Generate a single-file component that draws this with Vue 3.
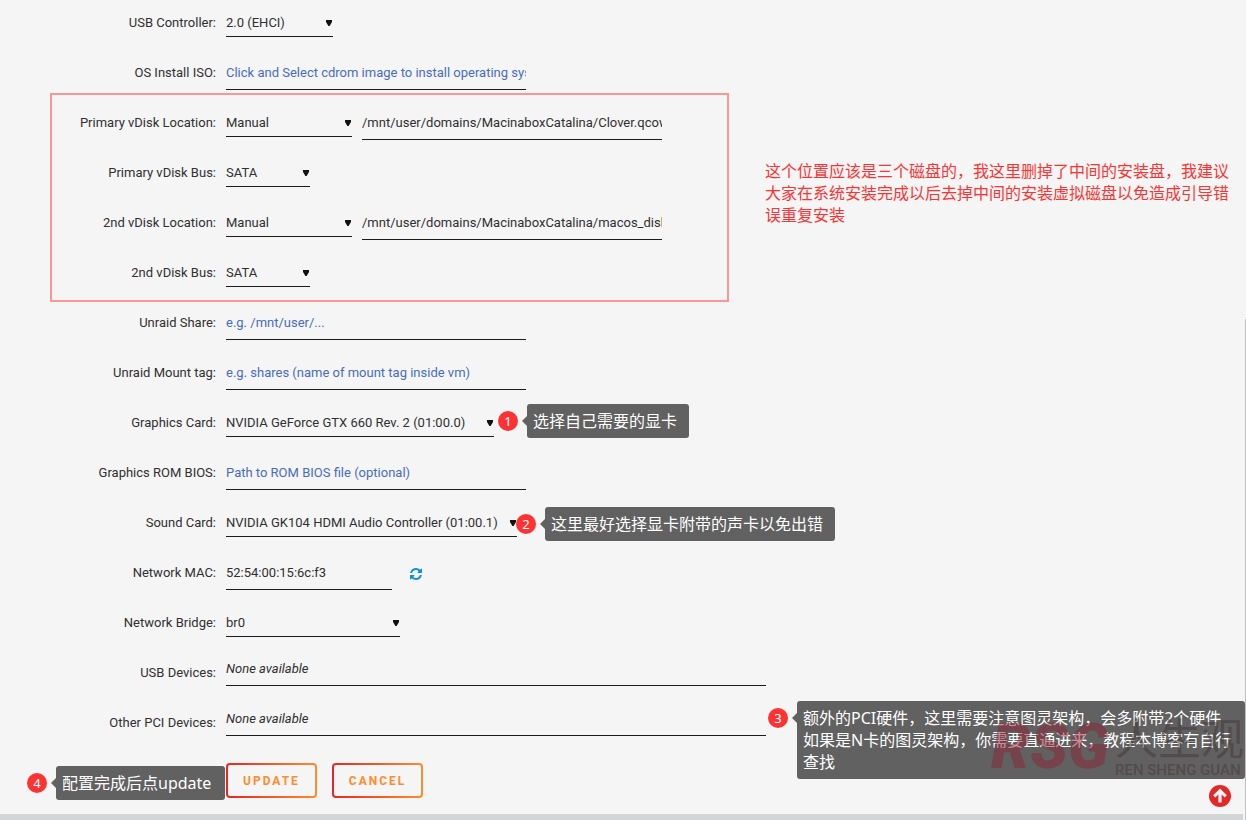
<script setup>
import { reactive } from 'vue'

const form = reactive({
  usb: '2.0 (EHCI)',
  iso: '',
  share: '',
  mount: '',
  graphics: 'NVIDIA GeForce GTX 660 Rev. 2 (01:00.0)',
  rom: '',
  sound: 'NVIDIA GK104 HDMI Audio Controller (01:00.1)',
  mac: '52:54:00:15:6c:f3',
  bridge: 'br0',
})

const disks = reactive([
  { label: 'Primary', location: 'Manual', path: '/mnt/user/domains/MacinaboxCatalina/Clover.qcow2', bus: 'SATA' },
  { label: '2nd', location: 'Manual', path: '/mnt/user/domains/MacinaboxCatalina/macos_disk.img', bus: 'SATA' },
])

const scrollTop = () => window.scrollTo({ top: 0 })
</script>

<template>
  <main class="page">
    <form class="vm-form" @submit.prevent>
      <div class="row">
        <label for="usb">USB Controller:</label>
        <span class="select select-usb">
          <select id="usb" v-model="form.usb">
            <option>2.0 (EHCI)</option>
            <option>3.0 (qemu XHCI)</option>
          </select>
        </span>
      </div>
      <div class="row">
        <label for="iso">OS Install ISO:</label>
        <input
          id="iso"
          v-model="form.iso"
          type="text"
          placeholder="Click and Select cdrom image to install operating system"
        />
      </div>

      <div class="disks">
        <template v-for="(disk, i) in disks" :key="disk.label">
          <div class="row">
            <label :for="`location${i}`">{{ disk.label }} vDisk Location:</label>
            <span class="select select-location">
              <select :id="`location${i}`" v-model="disk.location">
                <option>Manual</option>
                <option>Auto</option>
              </select>
            </span>
            <input v-model="disk.path" type="text" :aria-label="`${disk.label} vDisk path`" />
          </div>
          <div class="row">
            <label :for="`bus${i}`">{{ disk.label }} vDisk Bus:</label>
            <span class="select select-bus">
              <select :id="`bus${i}`" v-model="disk.bus">
                <option>SATA</option>
                <option>VirtIO</option>
              </select>
            </span>
          </div>
        </template>
        <p class="remark">
          这个位置应该是三个磁盘的，我这里删掉了中间的安装盘，我建议<br />大家在系统安装完成以后去掉中间的安装虚拟磁盘以免造成引导错<br />误重复安装
        </p>
      </div>

      <div class="row">
        <label for="share">Unraid Share:</label>
        <input id="share" v-model="form.share" type="text" placeholder="e.g. /mnt/user/..." />
      </div>
      <div class="row">
        <label for="mount">Unraid Mount tag:</label>
        <input
          id="mount"
          v-model="form.mount"
          type="text"
          placeholder="e.g. shares (name of mount tag inside vm)"
        />
      </div>
      <div class="row">
        <label for="graphics">Graphics Card:</label>
        <span class="select select-graphics">
          <select id="graphics" v-model="form.graphics">
            <option>NVIDIA GeForce GTX 660 Rev. 2 (01:00.0)</option>
          </select>
        </span>
        <div class="note note-graphics">
          <span class="badge">1</span>
          <p class="bubble">选择自己需要的显卡</p>
        </div>
      </div>
      <div class="row">
        <label for="rom">Graphics ROM BIOS:</label>
        <input id="rom" v-model="form.rom" type="text" placeholder="Path to ROM BIOS file (optional)" />
      </div>
      <div class="row">
        <label for="sound">Sound Card:</label>
        <span class="select select-sound">
          <select id="sound" v-model="form.sound">
            <option>NVIDIA GK104 HDMI Audio Controller (01:00.1)</option>
          </select>
        </span>
        <div class="note note-sound">
          <span class="badge">2</span>
          <p class="bubble">这里最好选择显卡附带的声卡以免出错</p>
        </div>
      </div>
      <div class="row">
        <label for="mac">Network MAC:</label>
        <input id="mac" v-model="form.mac" class="mac" type="text" />
        <button class="refresh" type="button" aria-label="Generate MAC">
          <svg viewBox="0 0 1536 1536" width="12" height="12">
            <path
              fill="currentColor"
              d="M1511 928q0 5-1 7-64 268-268 434.500T764 1536q-146 0-282.500-55T238 1324l-129 129q-19 19-45 19t-45-19-19-45V960q0-26 19-45t45-19h448q26 0 45 19t19 45-19 45l-137 137q71 66 161 102t187 36q134 0 250-65t186-179q11-17 53-117 8-23 30-23h192q13 0 22.500 9.500t9.500 22.500zm25-800v448q0 26-19 45t-45 19h-448q-26 0-45-19t-19-45 19-45l138-138Q969 256 768 256q-134 0-250 65T332 500q-11 17-53 117-8 23-30 23H50q-13 0-22.500-9.500T18 608v-7q65-268 270-434.500T768 0q146 0 284 55.500T1297 212l130-129q19-19 45-19t45 19 19 45z"
            />
          </svg>
        </button>
      </div>
      <div class="row">
        <label for="bridge">Network Bridge:</label>
        <span class="select select-bridge">
          <select id="bridge" v-model="form.bridge">
            <option>br0</option>
            <option>virbr0</option>
          </select>
        </span>
      </div>
      <div class="row">
        <span class="label">USB Devices:</span>
        <div class="devices">None available</div>
      </div>
      <div class="row">
        <span class="label">Other PCI Devices:</span>
        <div class="devices">None available</div>
        <div class="note note-pci">
          <span class="badge">3</span>
          <div class="bubble">
            额外的PCI硬件，这里需要注意图灵架构，会多附带2个硬件<br />如果是N卡的图灵架构，你需要直通进来，教程本博客有自行<br />查找
            <div class="watermark">
              <span class="mark">RSG</span>
              <span class="mark-text">
                <span class="mark-name">人生观</span>
                <span class="mark-latin">REN SHENG GUAN</span>
              </span>
            </div>
          </div>
        </div>
      </div>

      <div class="actions">
        <button class="action" type="submit">UPDATE</button>
        <button class="action" type="button">CANCEL</button>
        <div class="note note-update">
          <span class="badge">4</span>
          <p class="bubble">配置完成后点update</p>
        </div>
      </div>
    </form>

    <button class="to-top" type="button" aria-label="Back to top" @click="scrollTop">
      <svg viewBox="0 0 22 22" width="22" height="22">
        <circle cx="11" cy="11" r="11" fill="#e22828" />
        <path
          d="M11 3.500 17.800 10.300 15.700 12.500 12.600 9.400V17.500H9.400V9.400L6.300 12.500 4.200 10.300Z"
          fill="#f5f5f5"
        />
      </svg>
    </button>
    <footer class="footer"></footer>
    <div class="scroll-thumb"></div>
  </main>
</template>

<style>
body {
  margin: 0;
  background: #f5f5f5;
}
</style>

<style scoped>
.page {
  position: relative;
  min-height: 100vh;
  box-sizing: border-box;
  display: flex;
  flex-direction: column;
  overflow: hidden;
  color: #303030;
  font-family: Roboto, 'Noto Sans CJK SC', sans-serif;
  font-size: 13px;
  line-height: 30px;
}

.vm-form {
  flex: 1;
  padding-top: 8px;
}

.row {
  position: relative;
  display: flex;
  align-items: flex-start;
  height: 50px;
}

.row > label,
.row > .label {
  width: 216px;
  margin-right: 10px;
  text-align: right;
  white-space: nowrap;
}

input,
select {
  box-sizing: border-box;
  margin: 0;
  padding: 0;
  border: 0;
  border-bottom: 1px solid #1c1b1b;
  border-radius: 0;
  outline: 0;
  background: transparent;
  color: #303030;
  font: inherit;
}

input {
  width: 300px;
  height: 32px;
  padding-bottom: 2px;
}

input::placeholder {
  color: #486dba;
  opacity: 1;
}

.mac {
  width: 166px;
}

.select {
  position: relative;
  height: 29px;
}

.select + input {
  margin-left: 10px;
}

.select select {
  width: 100%;
  height: 29px;
  appearance: none;
}

.select::after {
  content: '';
  position: absolute;
  top: 12px;
  right: 1px;
  width: 6px;
  height: 6px;
  background: #111;
  clip-path: polygon(0 0, 100% 0, 100% 35%, 60% 100%, 40% 100%, 0 35%);
  pointer-events: none;
}

.select-usb {
  width: 107px;
}

.select-location {
  width: 126px;
}

.select-bus {
  width: 84px;
}

.select-graphics {
  width: 268px;
}

.select-sound {
  width: 291px;
}

.select-bridge {
  width: 174px;
}

.devices {
  width: 540px;
  height: 27px;
  border-bottom: 1px solid #1c1b1b;
  font-style: italic;
  line-height: 22px;
}

.refresh {
  display: flex;
  margin: 10px 0 0 18px;
  padding: 0;
  border: 0;
  background: none;
  color: #0e8fd8;
  cursor: pointer;
}

/* red frame around the disk rows */
.disks {
  position: relative;
}

.disks::after {
  content: '';
  position: absolute;
  top: -15px;
  left: 50px;
  width: 675px;
  height: 205px;
  border: 2px solid #fa9696;
  pointer-events: none;
}

.remark {
  position: absolute;
  top: 53px;
  left: 765px;
  margin: 0;
  color: #fd3333;
  font-size: 16px;
  line-height: 22px;
  white-space: nowrap;
}

.note {
  position: absolute;
  display: flex;
  align-items: flex-start;
  color: #fff;
  font-family: 'Noto Sans', 'Noto Sans CJK SC', sans-serif;
  white-space: nowrap;
}

.badge {
  width: 20px;
  height: 20px;
  margin: 7px 9px 0 0;
  border-radius: 50%;
  background: #fd3333;
  font-size: 13px;
  line-height: 20px;
  text-align: center;
}

.bubble {
  position: relative;
  box-sizing: border-box;
  margin: 0;
  padding: 6px;
  border-radius: 3px;
  background: #616161;
  font-size: 16px;
  line-height: 22px;
}

.bubble::before {
  content: '';
  position: absolute;
  top: 12px;
  left: -5px;
  border: 5px solid transparent;
  border-left: 0;
  border-right-color: #616161;
}

.note-graphics {
  top: -4px;
  left: 498px;
}

.note-graphics .bubble {
  width: 162px;
}

.note-sound {
  top: -1px;
  left: 516px;
}

.note-sound .bubble {
  width: 290px;
}

.note-pci {
  top: -7px;
  left: 768px;
}

.note-pci .bubble {
  width: 448px;
  height: 78px;
}

.note-update {
  top: 8px;
  left: 27px;
}

.note-update .bubble {
  width: 169px;
}

.watermark {
  position: absolute;
  top: 14px;
  right: 1px;
  display: flex;
  align-items: center;
  gap: 6px;
  pointer-events: none;
}

.mark {
  color: rgba(140, 36, 54, 0.5);
  font: italic 900 62px/64px Roboto, sans-serif;
}

.mark-text {
  display: flex;
  flex-direction: column;
  color: rgba(66, 54, 54, 0.5);
}

.mark-name {
  font-size: 43px;
  font-weight: 400;
  line-height: 46px;
}

.mark-latin {
  font: 500 15px/16px Roboto, sans-serif;
}

.actions {
  position: relative;
  display: flex;
  gap: 15px;
  padding: 5px 0 16px 226px;
}

.action {
  height: 35px;
  padding: 0 15px;
  border: 2px solid transparent;
  border-radius: 4px;
  background:
    linear-gradient(#f5f5f5, #f5f5f5) padding-box,
    linear-gradient(90deg, #e22828, #ff8c2f) border-box;
  color: #ff8c2f;
  font: 700 12px Roboto, sans-serif;
  letter-spacing: 2px;
  cursor: pointer;
}

.to-top {
  position: absolute;
  right: 15px;
  bottom: 13px;
  display: flex;
  padding: 0;
  border: 0;
  background: none;
  cursor: pointer;
}

.footer {
  height: 6px;
  margin-right: 3px;
  background: #d4d5d6;
}

.scroll-thumb {
  position: absolute;
  top: 319px;
  right: 0;
  bottom: 0;
  width: 1px;
  background: #c1c1c1;
}
</style>
